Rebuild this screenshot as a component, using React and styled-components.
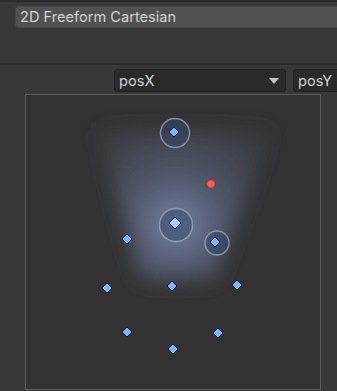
import styled, { createGlobalStyle } from "styled-components";

const Global = createGlobalStyle`
  html, body {
    margin: 0;
    background: #383838;
  }
  body {
    font-family: Inter, "Noto Sans", "Liberation Sans", sans-serif;
  }
`

const Page = styled.div`
  width: 337px;
  height: 391px;
  overflow: hidden;
  border-top: 2px solid #2b2b2b;
  box-sizing: border-box;
  display: flex;
  flex-direction: column;
`

const HeaderRow = styled.div`
  height: 63px;
  flex-shrink: 0;
  padding: 4px 0 0 15px;
  box-sizing: border-box;
  border-bottom: 2px solid #2a2a2a;
`

const TypeField = styled.div`
  height: 22px;
  width: 340px;
  background: #515151;
  border: 1px solid #474747;
  border-radius: 3px;
  box-sizing: border-box;
  display: flex;
  align-items: center;
  padding-left: 4px;
  color: #d4d4d4;
  font-size: 14.6px;
`

const ParamRow = styled.div`
  display: flex;
  gap: 7px;
  padding: 4px 0 0 114px;
  height: 29px;
  flex-shrink: 0;
  box-sizing: border-box;
`

const Dropdown = styled.div`
  width: ${p => p.$w}px;
  flex-shrink: 0;
  height: 23px;
  background: #2a2a2a;
  border: 1px solid #212121;
  border-radius: 3px;
  box-sizing: border-box;
  display: flex;
  align-items: center;
  justify-content: space-between;
  padding: 0 5px 0 4px;
  color: #d2d2d2;
  font-size: 14.6px;
`

const Arrow = styled.span`
  width: 0;
  height: 0;
  border-left: 5px solid transparent;
  border-right: 5px solid transparent;
  border-top: 6px solid #c4c4c4;
  margin-right: 1px;
`

const BlendBox = styled.div`
  margin: 0 0 0 25px;
  width: 296px;
  height: 296px;
  flex-shrink: 0;
  background: #323232;
  border: 1px solid #5c5c5c;
  box-sizing: border-box;
`

const Canvas = styled.svg`
  display: block;
  width: 294px;
  height: 294px;
`

const diamonds = [
  [174, 132], [127, 239], [215, 242],
  [107, 288], [172, 286], [237, 285],
  [127, 332], [218, 333], [173, 349],
]

const rings = [
  { x: 175, y: 133, r: 14.5 },
  { x: 176, y: 225, r: 16.5 },
  { x: 217, y: 243, r: 12 },
]

function Diamond({ x, y, s = 5, fill = "#7fb2ff" }) {
  return (
    <polygon
      points={`${x},${y - s} ${x + s},${y} ${x},${y + s} ${x - s},${y}`}
      fill={fill}
      stroke="#16202e"
      strokeWidth="1"
    />
  )
}

export default function App() {
  return (
    <Page>
      <Global />
      <HeaderRow>
        <TypeField>2D Freeform Cartesian</TypeField>
      </HeaderRow>
      <ParamRow>
        <Dropdown $w={172}>
          posX
          <Arrow />
        </Dropdown>
        <Dropdown $w={60}>posY</Dropdown>
      </ParamRow>
      <BlendBox>
        <Canvas viewBox="26 95 294 294">
          <defs>
            <radialGradient id="glow" cx="176" cy="224" r="120" gradientUnits="userSpaceOnUse">
              <stop offset="0" stopColor="#7886a8" stopOpacity="1" />
              <stop offset="0.35" stopColor="#5a637c" stopOpacity="0.85" />
              <stop offset="1" stopColor="#3c4048" stopOpacity="0.55" />
            </radialGradient>
            <filter id="soft" x="-40%" y="-40%" width="180%" height="180%">
              <feGaussianBlur stdDeviation="10" />
            </filter>
          </defs>
          <polygon
            points="98,130 272,130 214,280 140,280"
            fill="url(#glow)"
            filter="url(#soft)"
          />
          {rings.map((c, i) => (
            <circle
              key={i}
              cx={c.x}
              cy={c.y}
              r={c.r}
              fill="rgba(50,72,105,0.5)"
              stroke="#a4adbd"
              strokeOpacity="0.75"
              strokeWidth="1.4"
            />
          ))}
          {diamonds.map(([x, y], i) => (
            <Diamond key={i} x={x} y={y} />
          ))}
          <Diamond x={175} y={223} s={6} fill="#a9cdff" />
          <circle cx={211} cy={184} r={4.2} fill="#ff5a5a" stroke="#8a2a2a" strokeWidth="0.8" />
        </Canvas>
      </BlendBox>
    </Page>
  )
}
